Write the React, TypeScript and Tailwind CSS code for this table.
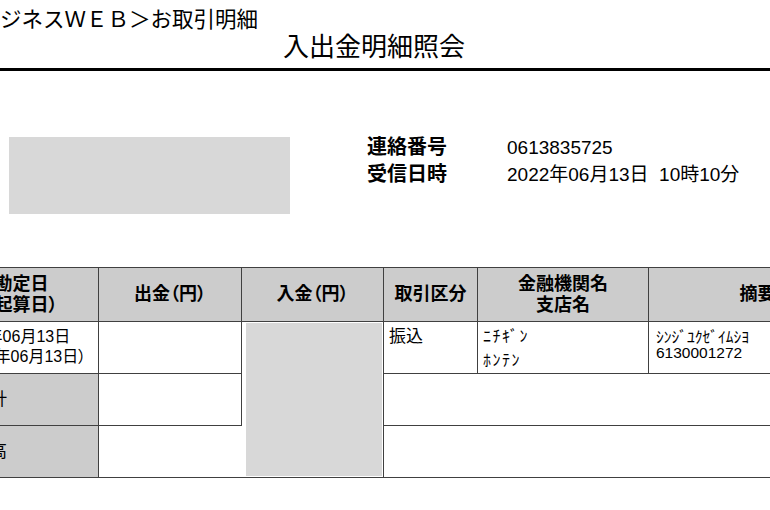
import React from "react";

const line = "border border-[#404040]";

export default function App() {
  return (
    <div className="w-[770px] h-[510px] overflow-hidden bg-white text-black font-['Liberation_Sans','Noto_Sans_CJK_JP',sans-serif]">
      {/* page header */}
      <div className="pt-[8px]">
        <p className="ml-[-21.5px] text-[21.5px] leading-[24px] whitespace-nowrap">ビジネスＷＥＢ＞お取引明細</p>
      </div>
      <h1 className="pl-[283px] text-[26px] leading-[30px] whitespace-nowrap">入出金明細照会</h1>
      <div className="mt-[6px] h-[3px] bg-black" />

      {/* address block + contact info */}
      <div className="mt-[63px] flex">
        <div className="ml-[9px] mt-[3px] w-[281px] h-[77px] bg-[#d8d8d8]" />
        <dl className="ml-[77px] grid grid-cols-[140px_auto] auto-rows-[27px] leading-[27px] whitespace-nowrap">
          <dt className="h-[27px] font-bold text-[20px]">連絡番号</dt>
          <dd className="h-[27px] text-[19px]">0613835725</dd>
          <dt className="h-[27px] font-bold text-[20px]">受信日時</dt>
          <dd className="h-[27px] text-[19px]">2022年06月13日&nbsp;&nbsp;10時10分</dd>
        </dl>
      </div>

      {/* statement table */}
      <div className="mt-[53px] ml-[-56px]">
        <table className="table-fixed border-collapse w-[922px]">
          <colgroup>
            <col className="w-[154px]" />
            <col className="w-[143px]" />
            <col className="w-[142px]" />
            <col className="w-[94px]" />
            <col className="w-[171px]" />
            <col className="w-[218px]" />
          </colgroup>
          <thead>
            <tr className="h-[54px] bg-[#cccccc] text-[18px] font-bold leading-[21px] [font-feature-settings:'palt']">
              <th className={line}>勘定日<br />（起算日）</th>
              <th className={line}>出金（円）</th>
              <th className={line}>入金（円）</th>
              <th className={line}>取引区分</th>
              <th className={line}>金融機関名<br />支店名</th>
              <th className={line}>摘要</th>
            </tr>
          </thead>
          <tbody>
            <tr className="h-[52px]">
              <td className={`${line} align-top pl-[6px] pt-[5px] text-[16px] leading-[20px] whitespace-nowrap [font-feature-settings:'palt']`}>
                2022年06月13日<br />（2022年06月13日）
              </td>
              <td className={line} />
              <td rowSpan={3} className={`${line} align-top p-0 pt-[1px]`}>
                <div className="ml-[4px] mr-[1px] h-[153px] bg-[#d8d8d8]" />
              </td>
              <td className={`${line} align-top pl-[5px] pt-[4px] text-[17px] leading-[22px]`}>振込</td>
              <td className={`${line} align-top pl-[5px] pt-[3px] text-[16px] leading-[24px] tracking-[1.5px] whitespace-nowrap`}>
                ﾆﾁｷﾞﾝ<br />ﾎﾝﾃﾝ
              </td>
              <td className={`${line} align-top pl-[7px] pt-[8px] text-[15.5px] leading-[15px] whitespace-nowrap`}>
                ｼﾝｼﾞﾕｸｾﾞｲﾑｼﾖ<br />6130001272
              </td>
            </tr>
            <tr className="h-[52px]">
              <td className={`${line} bg-[#cccccc] pl-[28px] text-[17px]`}>合計</td>
              <td className={line} />
              <td colSpan={3} className={line} />
            </tr>
            <tr className="h-[52px]">
              <td className={`${line} bg-[#cccccc] pl-[28px] text-[17px]`}>残高</td>
              <td className={`${line} [border-right-style:hidden]`} />
              <td colSpan={3} className={line} />
            </tr>
          </tbody>
        </table>
      </div>
    </div>
  );
}
